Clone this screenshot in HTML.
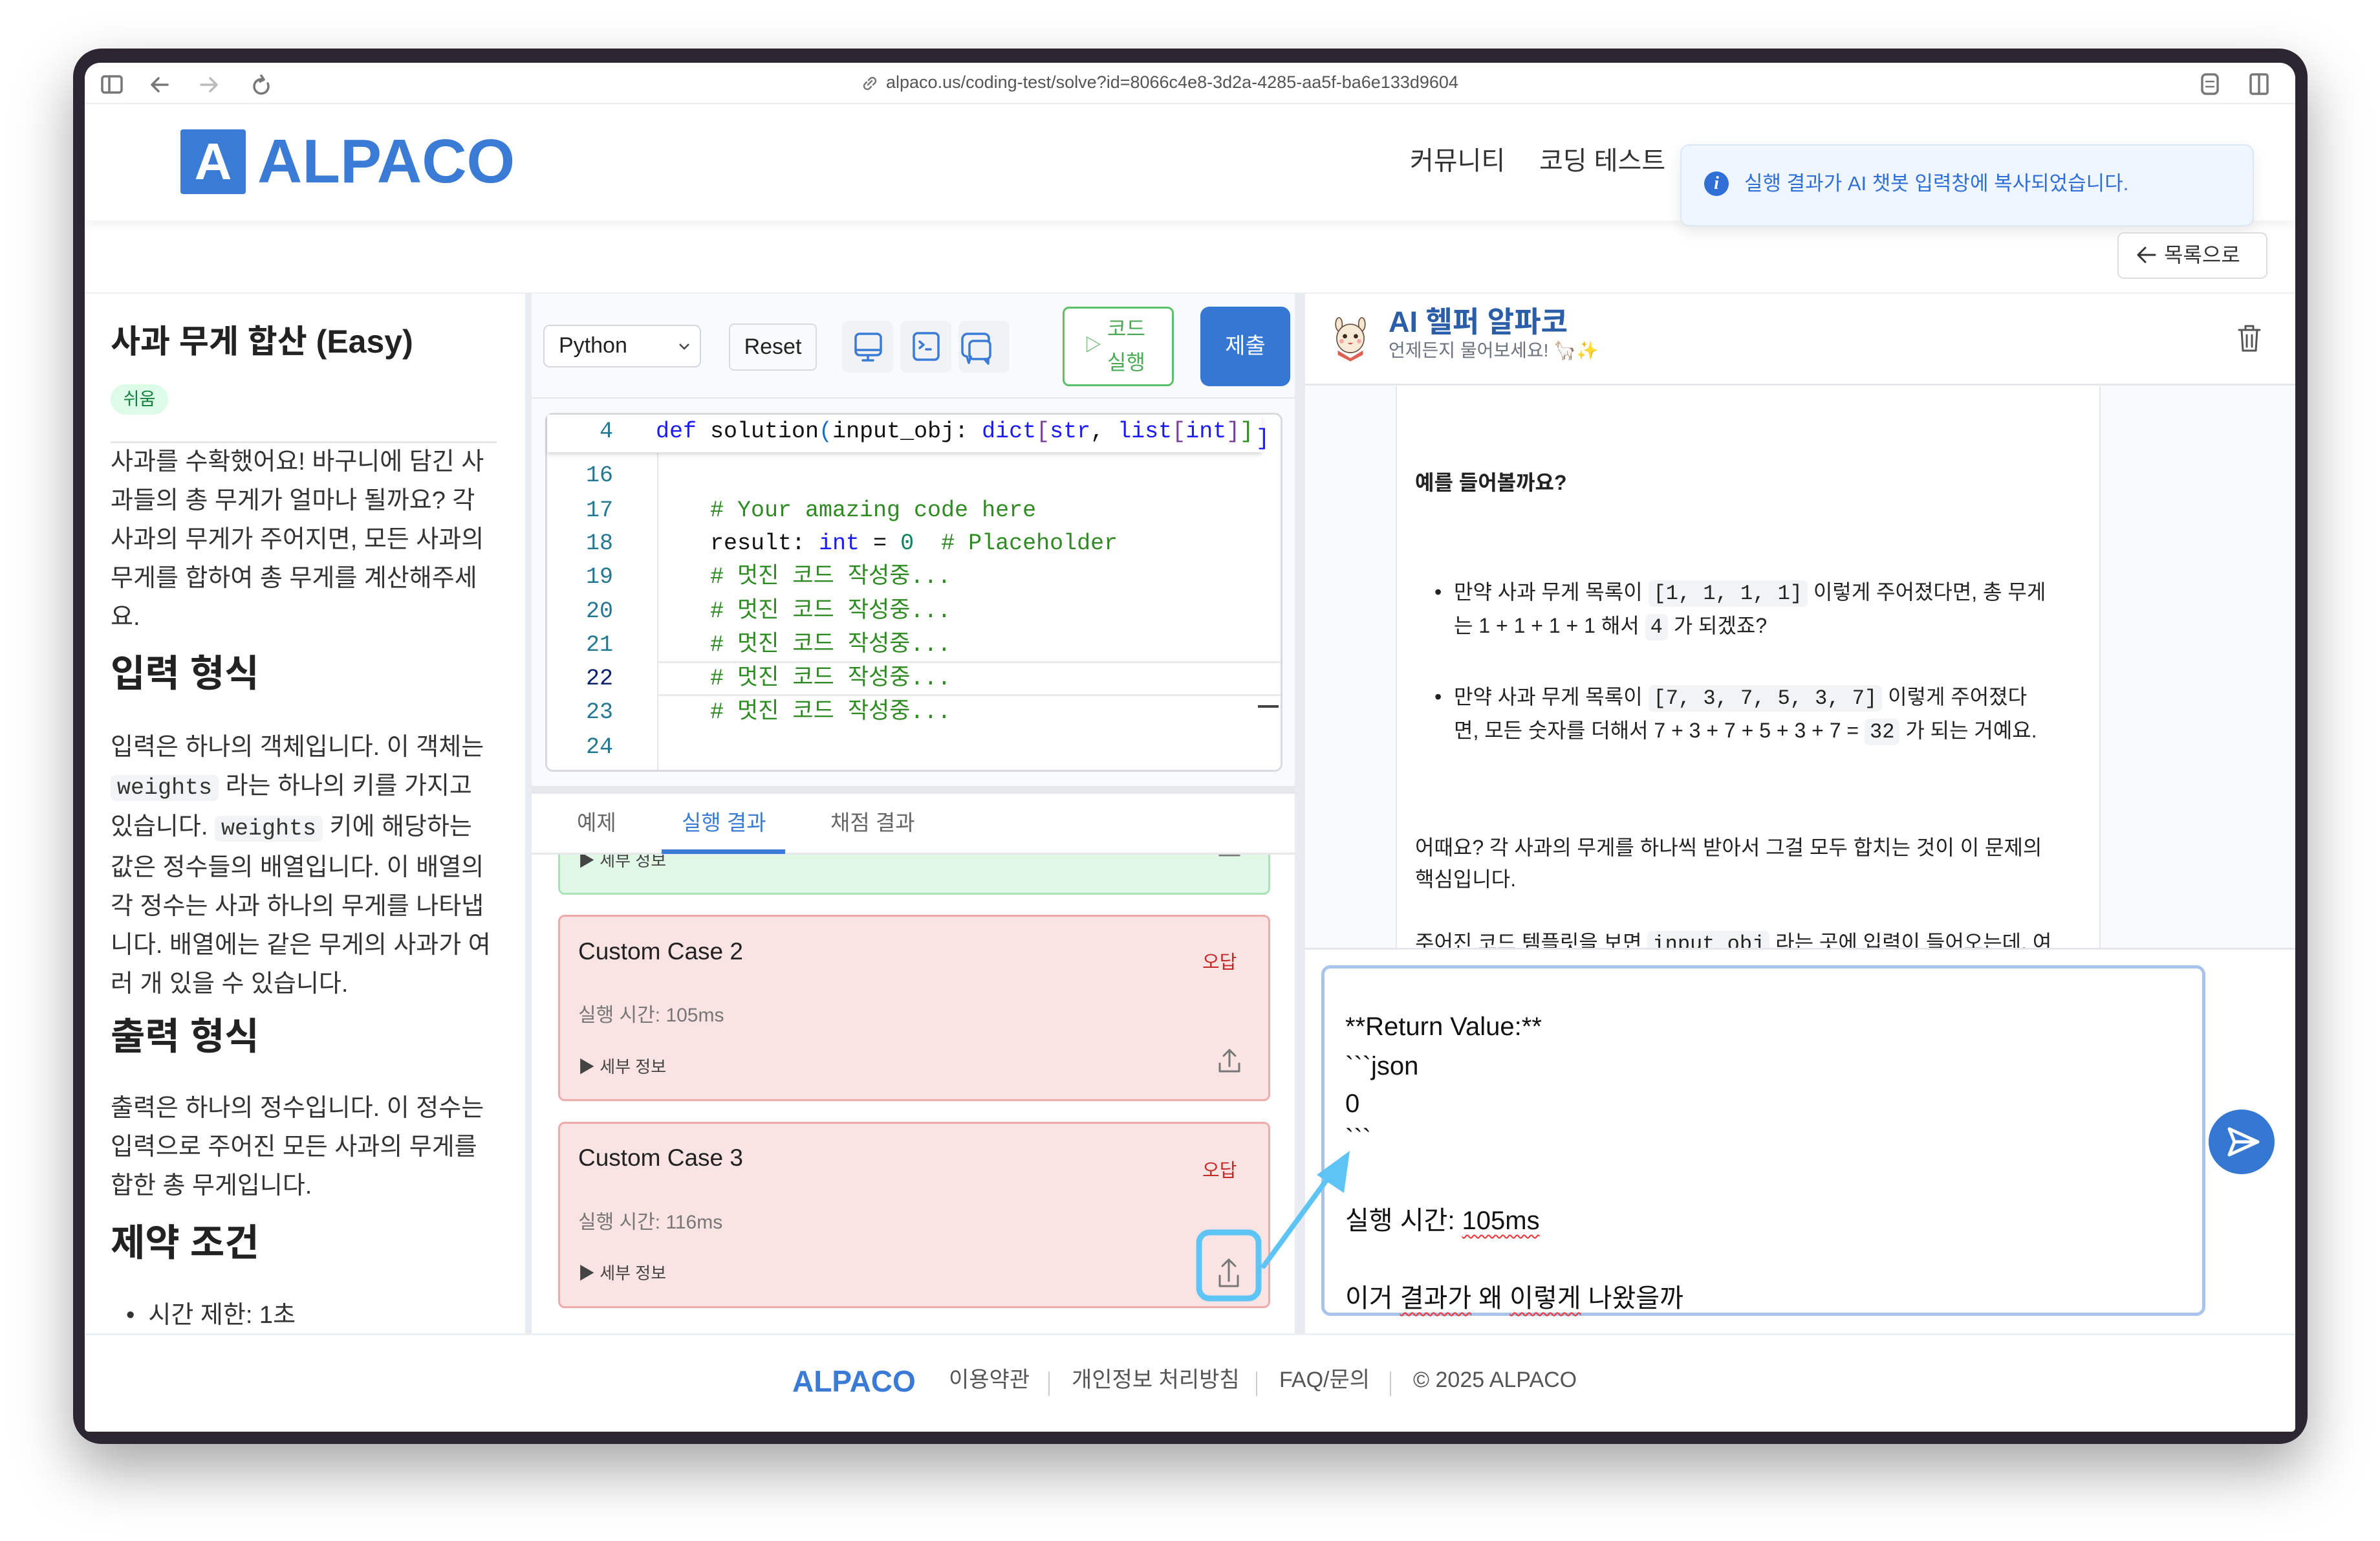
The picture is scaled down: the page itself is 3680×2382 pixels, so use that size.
<!DOCTYPE html>
<html><head><meta charset="utf-8">
<style>
*{box-sizing:border-box;margin:0;padding:0}
html,body{width:3680px;height:2382px;background:#fff;overflow:hidden}
body{font-family:"Liberation Sans","Noto Sans CJK KR",sans-serif;color:#222;position:relative}
.a{position:absolute}
.t{position:absolute;white-space:nowrap;line-height:1.2}
.ic{stroke:#777;fill:none;stroke-width:3.5;stroke-linecap:round;stroke-linejoin:round}
.lp{position:absolute;left:171px;font-size:38px;line-height:60px;color:#333;white-space:nowrap}
.h2{position:absolute;left:171px;font-size:58px;font-weight:700;color:#222;line-height:1.2;white-space:nowrap}
code.c{font-family:"Liberation Mono",monospace;background:#f1f3f5;border-radius:8px;padding:0 10px;font-size:35px}
.ln{position:absolute;width:948px;left:0;text-align:right;color:#237893;font-size:35px;line-height:52px;font-family:"Liberation Mono",monospace}
.cl{position:absolute;font-size:35px;line-height:52px;white-space:pre;font-family:"Liberation Mono","Noto Sans CJK KR",monospace}
.card{position:absolute;left:863px;width:1101px;background:#f9e3e3;border:3px solid #f0aaaa;border-radius:10px}
.cm{position:absolute;font-size:32px;line-height:38px;color:#222;white-space:nowrap}
.cm code{font-family:"Liberation Mono",monospace;background:#f1f3f5;border-radius:8px;padding:2px 8px;font-size:32px}
.ta{position:absolute;left:2080px;font-size:40px;line-height:48px;color:#111;white-space:pre}
.sq{text-decoration:underline wavy #e33;text-decoration-thickness:2px;text-underline-offset:8px}
</style></head><body>
<div class="a" style="left:113px;top:75px;width:3455px;height:2157px;background:#2b2632;border-radius:44px;box-shadow:0 40px 90px rgba(0,0,0,.35)"></div>
<div class="a" style="left:131px;top:97px;width:3418px;height:2116px;background:#fff;border-radius:24px 24px 6px 6px"></div>

<div class="a" style="left:131px;top:159px;width:3418px;height:2px;background:#eee"></div>
<svg class="a" style="left:155px;top:113px" width="300" height="36" viewBox="0 0 300 36">
 <rect x="3" y="5" width="30" height="25" rx="4" class="ic"/><line x1="14" y1="5" x2="14" y2="30" class="ic"/>
 <path d="M104 18H80M90 8L80 18L90 28" class="ic"/>
 <path d="M180 18H156M170 8L180 18L170 28" class="ic" style="stroke:#bbb"/>
 <path d="M252 10A11 11 0 1 0 259 16M249 4L253 10L247 13" class="ic"/>
</svg>
<svg class="a" style="left:1330px;top:114px" width="30" height="30" viewBox="0 0 30 30"><path d="M12 17l6-6M10 13l-3 3a5 5 0 0 0 7 7l3-3M20 17l3-3a5 5 0 0 0-7-7l-3 3" class="ic" style="stroke-width:2.5"/></svg>
<div class="t" style="left:1370px;top:111px;font-size:27px;color:#555">alpaco.us/coding-test/solve?id=8066c4e8-3d2a-4285-aa5f-ba6e133d9604</div>
<svg class="a" style="left:3400px;top:110px" width="120" height="40" viewBox="0 0 120 40">
 <rect x="5" y="5" width="24" height="30" rx="6" class="ic"/><path d="M11 16h12M11 24h12" class="ic" style="stroke-width:2.5"/>
 <rect x="80" y="5" width="26" height="30" rx="3" class="ic"/><line x1="93" y1="5" x2="93" y2="35" class="ic"/>
</svg>

<div class="a" style="left:131px;top:161px;width:3418px;height:180px;background:#fff;box-shadow:0 6px 14px rgba(0,0,0,.06)"></div>
<div class="a" style="left:279px;top:200px;width:101px;height:100px;background:#3a7bd5;border-radius:4px;color:#fff;font-weight:700;font-size:80px;text-align:center;line-height:100px">A</div>
<div class="t" style="left:398px;top:192px;font-size:96px;font-weight:700;color:#3a7bd5">ALPACO</div>
<div class="t" style="left:2180px;top:225px;font-size:40px;color:#333">커뮤니티</div>
<div class="t" style="left:2380px;top:225px;font-size:40px;color:#333">코딩 테스트</div>
<div class="a" style="left:2598px;top:223px;width:887px;height:127px;background:#eff6ff;border:2px solid #dbe7f7;border-radius:14px;box-shadow:0 10px 24px rgba(0,0,0,.08)"></div>
<div class="a" style="left:2635px;top:265px;width:38px;height:38px;border-radius:50%;background:#2f6fd6;color:#fff;font-weight:700;font-size:28px;text-align:center;line-height:38px;font-family:'Liberation Serif',serif;font-style:italic">i</div>
<div class="t" style="left:2697px;top:265px;font-size:31px;color:#2f6fd6">실행 결과가 AI 챗봇 입력창에 복사되었습니다.</div>
<div class="a" style="left:3274px;top:359px;width:232px;height:72px;border:2px solid #ddd;border-radius:10px;background:#fff"></div>
<svg class="a" style="left:3302px;top:378px" width="34" height="32" viewBox="0 0 34 32"><path d="M30 16H5M15 5L4 16L15 27" class="ic" style="stroke:#333;stroke-width:3"/></svg>
<div class="t" style="left:3346px;top:375px;font-size:32px;color:#333">목록으로</div>
<div class="a" style="left:131px;top:452px;width:3418px;height:2px;background:#eceff3"></div>

<div class="a" style="left:131px;top:454px;width:681px;height:1607px;background:#fff;overflow:hidden">
 <div class="a" style="left:-131px;top:-454px;width:900px;height:2200px">
  <div class="t" style="left:171px;top:498px;font-size:50px;font-weight:700;color:#222">사과 무게 합산 (Easy)</div>
  <div class="a" style="left:171px;top:594px;width:89px;height:47px;background:#dcfce7;border-radius:24px;color:#15803d;font-size:27px;text-align:center;line-height:47px">쉬움</div>
  <div class="a" style="left:171px;top:682px;width:597px;height:3px;background:#e5e7eb"></div>
  <div class="lp" style="top:684px">사과를 수확했어요! 바구니에 담긴 사<br>과들의 총 무게가 얼마나 될까요? 각<br>사과의 무게가 주어지면, 모든 사과의<br>무게를 합하여 총 무게를 계산해주세<br>요.</div>
  <div class="h2" style="top:1007px">입력 형식</div>
  <div class="lp" style="top:1125px">입력은 하나의 객체입니다. 이 객체는<br><code class="c">weights</code> 라는 하나의 키를 가지고<br>있습니다. <code class="c">weights</code> 키에 해당하는<br>값은 정수들의 배열입니다. 이 배열의<br>각 정수는 사과 하나의 무게를 나타냅<br>니다. 배열에는 같은 무게의 사과가 여<br>러 개 있을 수 있습니다.</div>
  <div class="h2" style="top:1568px">출력 형식</div>
  <div class="lp" style="top:1683px">출력은 하나의 정수입니다. 이 정수는<br>입력으로 주어진 모든 사과의 무게를<br>합한 총 무게입니다.</div>
  <div class="h2" style="top:1887px">제약 조건</div>
  <div class="lp" style="top:2003px;left:195px">•&nbsp;&nbsp;시간 제한: 1초</div>
 </div>
</div>
<div class="a" style="left:812px;top:454px;width:10px;height:1607px;background:#e8ebef"></div>

<div class="a" style="left:822px;top:454px;width:1180px;height:761px;background:#f8fafc"></div>
<div class="a" style="left:822px;top:614px;width:1180px;height:2px;background:#e5e7eb"></div>
<div class="a" style="left:840px;top:502px;width:244px;height:66px;border:2px solid #d4d7dc;border-radius:10px;background:#fff"></div>
<div class="t" style="left:864px;top:514px;font-size:34px;color:#222">Python</div>
<svg class="a" style="left:1048px;top:528px" width="20" height="14" viewBox="0 0 20 14"><path d="M3 4l7 7 7-7" fill="none" stroke="#444" stroke-width="2.5"/></svg>
<div class="a" style="left:1127px;top:500px;width:136px;height:73px;border:2px solid #d9dce0;border-radius:8px;background:#f9fafb;font-size:34px;line-height:69px;text-align:center;color:#222">Reset</div>
<div class="a" style="left:1302px;top:496px;width:79px;height:80px;background:#f0f2f5;border-radius:10px"></div>
<div class="a" style="left:1392px;top:496px;width:79px;height:80px;background:#f0f2f5;border-radius:10px"></div>
<div class="a" style="left:1482px;top:496px;width:79px;height:80px;background:#f0f2f5;border-radius:10px"></div>
<svg class="a" style="left:1302px;top:496px" width="260" height="80" viewBox="0 0 260 80">
 <g fill="none" stroke="#3a7bd5" stroke-width="3.5" stroke-linecap="round" stroke-linejoin="round">
  <rect x="21" y="20" width="39" height="33" rx="6"/><line x1="21" y1="45" x2="60" y2="45"/><path d="M40 53v7M32 61h16"/>
  <rect x="111" y="19" width="38" height="41" rx="6"/><path d="M120 32l6 5-6 5M130 44h7"/>
  <path d="M199 55l-3 10-3-10a7 7 0 0 1-7-7V28a8 8 0 0 1 8-8h26a7 7 0 0 1 7 7v4"/><rect x="197" y="31" width="32" height="28" rx="6"/><path d="M220 59l6 7v-7"/>
 </g>
</svg>
<div class="a" style="left:1643px;top:474px;width:172px;height:123px;border:3px solid #5cc06a;border-radius:10px;background:#fff"></div>
<div class="t" style="left:1677px;top:518px;font-size:26px;color:#4caa57">&#9655;</div>
<div class="a" style="left:1712px;top:482px;font-size:32px;line-height:52px;color:#4caa57;text-align:center;white-space:nowrap">코드<br>실행</div>
<div class="a" style="left:1856px;top:474px;width:139px;height:123px;background:#3578d4;border-radius:14px;color:#fff;font-size:34px;line-height:123px;text-align:center">제출</div>

<div class="a" style="left:843px;top:638px;width:1140px;height:555px;border:3px solid #d7dbe0;border-radius:12px;background:#fff"></div>
<div class="a" style="left:1016px;top:700px;width:2px;height:490px;background:#e5e7eb"></div>
<div class="a" style="left:1018px;top:1022px;width:962px;height:54px;border-top:3px solid #eaeaea;border-bottom:3px solid #eaeaea"></div>
<div class="ln" style="top:709px">16</div>
<div class="ln" style="top:763px">17</div><div class="cl" style="left:1098px;top:763px;color:#2e8b22"># Your amazing code here</div>
<div class="ln" style="top:814px">18</div><div class="cl" style="left:1098px;top:814px;color:#111">result: <span style="color:#1a1aff">int</span> = <span style="color:#098658">0</span>  <span style="color:#2e8b22"># Placeholder</span></div>
<div class="ln" style="top:866px">19</div><div class="cl" style="left:1098px;top:866px;color:#2e8b22"># 멋진 코드 작성중...</div>
<div class="ln" style="top:919px">20</div><div class="cl" style="left:1098px;top:919px;color:#2e8b22"># 멋진 코드 작성중...</div>
<div class="ln" style="top:971px">21</div><div class="cl" style="left:1098px;top:971px;color:#2e8b22"># 멋진 코드 작성중...</div>
<div class="ln" style="top:1023px;color:#0b216f">22</div><div class="cl" style="left:1098px;top:1023px;color:#2e8b22"># 멋진 코드 작성중...</div>
<div class="ln" style="top:1075px">23</div><div class="cl" style="left:1098px;top:1075px;color:#2e8b22"># 멋진 코드 작성중...</div>
<div class="ln" style="top:1129px">24</div>
<div class="a" style="left:1945px;top:1090px;width:32px;height:4px;background:#444"></div>
<div class="a" style="left:846px;top:641px;width:1105px;height:58px;background:#fff;box-shadow:0 4px 6px rgba(0,0,0,.14)"></div>
<div class="ln" style="top:641px">4</div>
<div class="cl" style="left:1014px;top:641px;color:#111"><span style="color:#1a1aff">def</span> solution<span style="color:#1a6fc9">(</span>input_obj: <span style="color:#1a1aff">dict</span><span style="color:#7a3e9d">[</span><span style="color:#1a1aff">str</span>, <span style="color:#1a1aff">list</span><span style="color:#7a3e9d">[</span><span style="color:#1a1aff">int</span><span style="color:#7a3e9d">]</span><span style="color:#2e8b22">]</span></div>
<div class="cl" style="left:1942px;top:652px;color:#1a1aff">]</div>

<div class="a" style="left:822px;top:1215px;width:1180px;height:12px;background:#e5e7eb"></div>
<div class="a" style="left:822px;top:1227px;width:1180px;height:834px;background:#fff"></div>
<div class="t" style="left:892px;top:1252px;font-size:33px;color:#666">예제</div>
<div class="t" style="left:1054px;top:1252px;font-size:33px;color:#3a7bd5">실행 결과</div>
<div class="t" style="left:1284px;top:1252px;font-size:33px;color:#666">채점 결과</div>

<div class="a" style="left:822px;top:1320px;width:1180px;height:741px;overflow:hidden">
 <div class="a" style="left:-822px;top:-1320px;width:2100px;height:2500px">
  <div class="card" style="top:1200px;height:183px;background:#e1f8e7;border-color:#a9e2b6"></div>
  <div class="t" style="left:894px;top:1315px;font-size:26px;color:#444">&#9654; 세부 정보</div>
  <svg class="a" style="left:1881px;top:1300px" width="40" height="30" viewBox="0 0 40 30"><path d="M20 18V0M5 10v12h30V10" fill="none" stroke="#777" stroke-width="3" stroke-linecap="round"/></svg>
  <div class="card" style="top:1414px;height:288px"></div>
  <div class="t" style="left:894px;top:1449px;font-size:37px;color:#222">Custom Case 2</div>
  <div class="t" style="left:1859px;top:1471px;font-size:29px;color:#c62828">오답</div>
  <div class="t" style="left:894px;top:1552px;font-size:30px;color:#777">실행 시간: 105ms</div>
  <div class="t" style="left:894px;top:1634px;font-size:26px;color:#444">&#9654; 세부 정보</div>
  <svg class="a" style="left:1881px;top:1618px" width="40" height="46" viewBox="0 0 40 46"><path d="M20 30V5M11 14l9-9 9 9M5 26v12h30V26" fill="none" stroke="#777" stroke-width="3" stroke-linecap="round" stroke-linejoin="round"/></svg>
  <div class="card" style="top:1734px;height:288px"></div>
  <div class="t" style="left:894px;top:1768px;font-size:37px;color:#222">Custom Case 3</div>
  <div class="t" style="left:1859px;top:1793px;font-size:29px;color:#c62828">오답</div>
  <div class="t" style="left:894px;top:1872px;font-size:30px;color:#777">실행 시간: 116ms</div>
  <div class="t" style="left:894px;top:1953px;font-size:26px;color:#444">&#9654; 세부 정보</div>
 </div>
</div>
<div class="a" style="left:822px;top:1318px;width:1180px;height:3px;background:#e5e7eb"></div>
<div class="a" style="left:1023px;top:1313px;width:191px;height:7px;background:#3a7bd5"></div>

<div class="a" style="left:2002px;top:454px;width:16px;height:1607px;background:#e8ebef"></div>

<div class="a" style="left:2018px;top:454px;width:1531px;height:142px;background:#fff;border-bottom:3px solid #e5e7eb"></div>
<svg class="a" style="left:2058px;top:486px" width="60" height="76" viewBox="0 0 70 90">
 <ellipse cx="14" cy="18" rx="6" ry="12" fill="#f5e6cf" stroke="#6b5040" stroke-width="2"/>
 <ellipse cx="56" cy="18" rx="6" ry="12" fill="#f5e6cf" stroke="#6b5040" stroke-width="2"/>
 <ellipse cx="35" cy="44" rx="25" ry="26" fill="#f7ead6" stroke="#6b5040" stroke-width="2"/>
 <circle cx="25" cy="40" r="4" fill="#3a2a20"/><circle cx="45" cy="40" r="4" fill="#3a2a20"/>
 <circle cx="19" cy="49" r="4" fill="#f4a6a0"/><circle cx="51" cy="49" r="4" fill="#f4a6a0"/>
 <path d="M30 52q5 6 10 0" fill="#d9534f"/>
 <path d="M12 66l23 14 23-14v8l-23 12-23-12z" fill="#e06050"/>
</svg>
<div class="t" style="left:2147px;top:471px;font-size:45px;font-weight:700;color:#2a5ea8">AI 헬퍼 알파코</div>
<div class="t" style="left:2147px;top:525px;font-size:28px;color:#6b7280">언제든지 물어보세요! 🦙✨</div>
<svg class="a" style="left:3458px;top:500px" width="40" height="48" viewBox="0 0 40 48"><path d="M4 10h32M14 10V4h12v6M8 10l2 32h20l2-32M16 18v18M24 18v18" fill="none" stroke="#555" stroke-width="3" stroke-linecap="round" stroke-linejoin="round"/></svg>

<div class="a" style="left:2018px;top:597px;width:1531px;height:868px;background:#f8fafc;overflow:hidden">
 <div class="a" style="left:140px;top:0;width:1090px;height:868px;background:#fff;border-left:2px solid #e5e7eb;border-right:2px solid #e5e7eb"></div>
 <div class="a" style="left:-2018px;top:-597px;width:3600px;height:2200px">
  <div class="cm" style="left:2188px;top:727px;font-weight:700">예를 들어볼까요?</div>
  <div class="cm" style="left:2218px;top:896px">•</div>
  <div class="cm" style="left:2248px;top:896px">만약 사과 무게 목록이 <code>[1, 1, 1, 1]</code> 이렇게 주어졌다면, 총 무게</div>
  <div class="cm" style="left:2248px;top:948px">는 1 + 1 + 1 + 1 해서 <code>4</code> 가 되겠죠?</div>
  <div class="cm" style="left:2218px;top:1058px">•</div>
  <div class="cm" style="left:2248px;top:1058px">만약 사과 무게 목록이 <code>[7, 3, 7, 5, 3, 7]</code> 이렇게 주어졌다</div>
  <div class="cm" style="left:2248px;top:1110px">면, 모든 숫자를 더해서 7 + 3 + 7 + 5 + 3 + 7 = <code>32</code> 가 되는 거예요.</div>
  <div class="cm" style="left:2188px;top:1291px">어때요? 각 사과의 무게를 하나씩 받아서 그걸 모두 합치는 것이 이 문제의</div>
  <div class="cm" style="left:2188px;top:1340px">핵심입니다.</div>
  <div class="cm" style="left:2188px;top:1438px">주어진 코드 템플릿을 보면 <code>input_obj</code> 라는 곳에 입력이 들어오는데, 여</div>
 </div>
</div>
<div class="a" style="left:2018px;top:1465px;width:1531px;height:3px;background:#e5e7eb"></div>
<div class="a" style="left:2043px;top:1492px;width:1367px;height:542px;border:5px solid #a8c4ec;border-radius:14px;background:#fff"></div>
<div class="ta" style="top:1563px">**Return Value:**</div>
<div class="ta" style="top:1624px">&#96;&#96;&#96;json</div>
<div class="ta" style="top:1682px">0</div>
<div class="ta" style="top:1736px">&#96;&#96;&#96;</div>
<div class="ta" style="top:1863px">실행 시간: <span class="sq">105ms</span></div>
<div class="ta" style="top:1983px">이거 <span class="sq">결과가</span> 왜 <span class="sq">이렇게</span> 나왔을까</div>
<div class="a" style="left:3415px;top:1715px;width:102px;height:100px;border-radius:50%;background:#3578d4"></div>
<svg class="a" style="left:3415px;top:1715px" width="102" height="100" viewBox="0 0 102 100"><path d="M32 30l44 20-44 20 8-20zM40 50h36" fill="none" stroke="#fff" stroke-width="5" stroke-linejoin="round" stroke-linecap="round"/></svg>

<svg class="a" style="left:1700px;top:1740px" width="500" height="320" viewBox="0 0 500 320">
 <rect x="154" y="165" width="92" height="102" rx="16" fill="#f9e3e3" stroke="#5ec4f5" stroke-width="9"/>
 <path d="M200 240V207M190 217l10-10 10 10M186 232v16h28V232" fill="none" stroke="#777" stroke-width="3" stroke-linecap="round" stroke-linejoin="round"/>
 <line x1="254" y1="217" x2="360" y2="72" stroke="#5ec4f5" stroke-width="8" stroke-linecap="round"/>
 <path d="M387 39L378 104L336 76Z" fill="#5ec4f5"/>
</svg>

<div class="a" style="left:131px;top:2061px;width:3418px;height:3px;background:#eceff3"></div>
<div class="t" style="left:1225px;top:2108px;font-size:46px;font-weight:700;color:#3a7bd5">ALPACO</div>
<div class="t" style="left:1467px;top:2113px;font-size:34px;color:#555">이용약관</div>
<div class="a" style="left:1621px;top:2120px;width:2px;height:38px;background:#ccc"></div>
<div class="t" style="left:1657px;top:2113px;font-size:34px;color:#555">개인정보 처리방침</div>
<div class="a" style="left:1942px;top:2120px;width:2px;height:38px;background:#ccc"></div>
<div class="t" style="left:1978px;top:2113px;font-size:34px;color:#555">FAQ/문의</div>
<div class="a" style="left:2149px;top:2120px;width:2px;height:38px;background:#ccc"></div>
<div class="t" style="left:2185px;top:2113px;font-size:34px;color:#555">© 2025 ALPACO</div>
</body></html>
